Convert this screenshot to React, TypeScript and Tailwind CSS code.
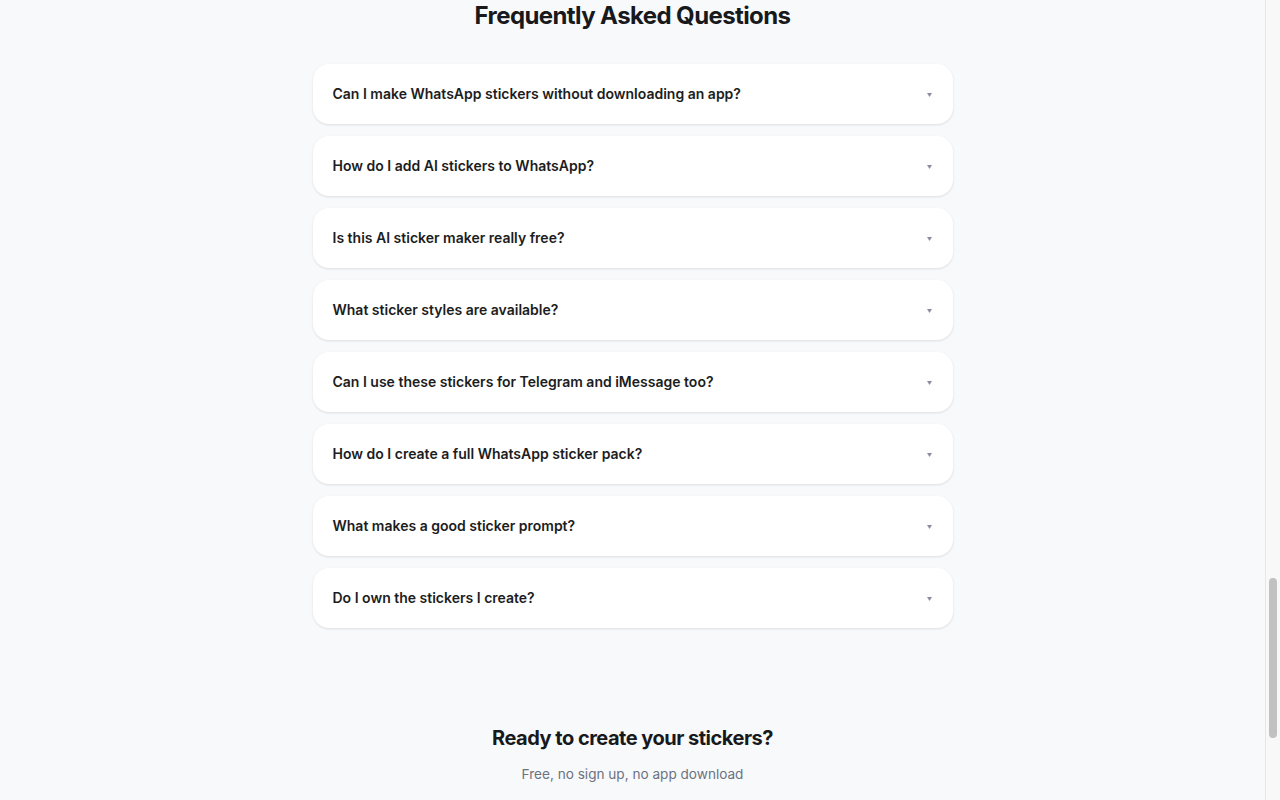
const faqs = [
  "Can I make WhatsApp stickers without downloading an app?",
  "How do I add AI stickers to WhatsApp?",
  "Is this AI sticker maker really free?",
  "What sticker styles are available?",
  "Can I use these stickers for Telegram and iMessage too?",
  "How do I create a full WhatsApp sticker pack?",
  "What makes a good sticker prompt?",
  "Do I own the stickers I create?",
];

function FaqItem({ question }: { question: string }) {
  return (
    <div className="bg-white rounded-2xl shadow-[0_1px_3px_rgba(0,0,0,0.08),0_1px_2px_rgba(0,0,0,0.04)]">
      <button className="w-full h-[60px] flex items-center justify-between pl-5 pr-[21px] text-left">
        <span className="text-[14px] leading-5 font-semibold text-[#1c1d21]">{question}</span>
        <svg width="5" height="4" viewBox="0 0 5 4" className="mt-px" aria-hidden="true">
          <path d="M0 0H5L2.5 4Z" fill="#8a8f9c" />
        </svg>
      </button>
    </div>
  );
}

// scrollbar track, as the page was captured scrolled down
function ScrollTrack() {
  return (
    <div className="w-[15px] h-screen shrink-0 bg-[#f8f8f8] border-l border-[#e6e6e6] flex flex-col pt-[578px] items-center">
      <div className="w-[8px] h-[160px] rounded-full bg-[#c1c1c1]" />
    </div>
  );
}

export default function App() {
  return (
    <div className="h-screen overflow-hidden flex bg-[#f8f9fb] font-['Inter',sans-serif]">
      <main className="flex-1 min-w-0">
        <section className="max-w-[640px] mx-auto pb-12">
          <h2 className="text-[24px] leading-8 font-bold tracking-tight text-center text-[#18191c] mb-8">
            Frequently Asked Questions
          </h2>
          <div className="flex flex-col gap-3">
            {faqs.map((q) => (
              <FaqItem key={q} question={q} />
            ))}
          </div>
        </section>
        <section className="pt-12 text-center">
          <h2 className="text-[20px] leading-7 font-bold tracking-tight text-[#18191c] mb-3">
            Ready to create your stickers?
          </h2>
          <p className="text-[13.6px] leading-5 text-[#6b7280]">Free, no sign up, no app download</p>
        </section>
      </main>
      <ScrollTrack />
    </div>
  );
}
